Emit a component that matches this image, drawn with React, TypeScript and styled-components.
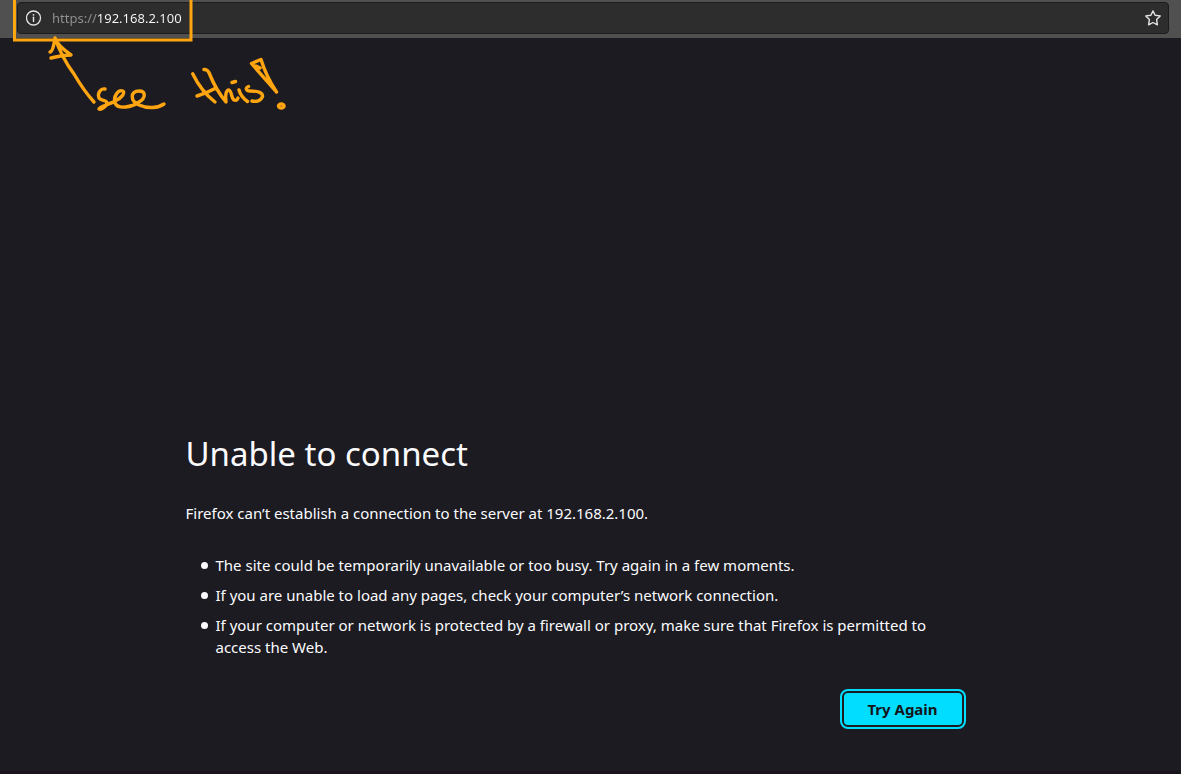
import React from "react";
import styled, { createGlobalStyle } from "styled-components";

const GlobalStyle = createGlobalStyle`
  *, *::before, *::after { box-sizing: border-box; }
  body {
    margin: 0;
    background: #1c1b22;
    color: #fbfbfe;
    font: 15px/22px "Noto Sans", sans-serif;
  }
`;

const Page = styled.div`
  position: relative;
  display: flex;
  flex-direction: column;
  min-height: 100vh;
  border-bottom: 3px solid #19141b;
`;

const Toolbar = styled.header`
  display: flex;
  height: 38px;
  padding: 2px 12px 4px 17px;
  background: #505050;
`;

const AddressBar = styled.div`
  display: flex;
  flex: 1;
  align-items: center;
  gap: 10px;
  padding: 0 7px 0 8px;
  border: 1px solid #1c1c1c;
  border-radius: 4px;
  background: #2d2d2d;
`;

const IconButton = styled.button`
  display: flex;
  padding: 0;
  border: 0;
  background: none;
  color: #e4e4e4;
`;

const AddressInput = styled.input`
  flex: 1;
  min-width: 0;
  height: 24px;
  padding: 0;
  border: 0;
  outline: 0;
  background: linear-gradient(to right, #929292 45px, #fbfbfe 45px);
  background-clip: text;
  -webkit-background-clip: text;
  color: transparent;
  font: 13px/24px "Noto Sans", sans-serif;
`;

const Annotation = styled.svg`
  position: absolute;
  top: 0;
  left: 0;
  pointer-events: none;
`;

const Main = styled.main`
  width: 100%;
  max-width: 810px;
  margin: 0 auto;
  padding: 392px 30px 40px 0;
`;

const Title = styled.h1`
  margin: 0 0 24px;
  font-size: 33px;
  font-weight: 400;
  line-height: 48px;
`;

const Summary = styled.p`
  margin: 0 0 30px;
`;

const Hints = styled.ul`
  display: flex;
  flex-direction: column;
  gap: 8px;
  margin: 0;
  padding: 0 0 0 15px;
  list-style: none;
`;

const Hint = styled.li`
  display: flex;
  gap: 8px;

  &::before {
    content: "";
    flex: none;
    width: 7px;
    height: 7px;
    margin-top: 8px;
    border-radius: 50%;
    background: currentColor;
  }
`;

const Actions = styled.div`
  display: flex;
  justify-content: flex-end;
  padding: 35px 4px 0 0;
`;

const PrimaryButton = styled.button`
  min-width: 118px;
  height: 32px;
  padding: 0 16px;
  border: 0;
  border-radius: 4px;
  outline: 2px solid #00ddff;
  outline-offset: 2px;
  background: #00ddff;
  color: #15141a;
  font: 700 15px/22px "Noto Sans", sans-serif;
`;

const InfoIcon = () => (
  <svg width="16" height="16" viewBox="0 0 16 16" fill="none" aria-hidden="true">
    <circle cx="7.5" cy="8" r="7" stroke="currentColor" strokeWidth="1.3" />
    <path d="M7.5 7.2v4.2" stroke="currentColor" strokeWidth="1.4" strokeLinecap="round" />
    <circle cx="7.5" cy="4.8" r="0.9" fill="currentColor" />
  </svg>
);

const StarIcon = () => (
  <svg width="16" height="16" viewBox="0 0 16 16" fill="none" aria-hidden="true">
    <path
      d="M8 .9 10.1 5.2 15.2 5.9 11.6 9.6 12.4 14.8 8 12.5 3.6 14.8 4.4 9.6 .8 5.9 5.9 5.2Z"
      stroke="currentColor"
      strokeWidth="1.4"
      strokeLinejoin="round"
    />
  </svg>
);

const Scribble = () => (
  <Annotation width="300" height="120" viewBox="0 0 300 120" fill="none" aria-hidden="true">
    <g stroke="#ffa50f" strokeWidth="3.4" strokeLinecap="round" strokeLinejoin="round">
      <path d="M14.5 -2V40H191V-2" strokeWidth="3" strokeLinejoin="miter" />
      <path d="M94 102 Q84 91 74 74 Q62 58 55 38 Q53 52 50 52 M55 38 Q57 45 71 55 Q63 55 51 58" />
      <path d="M105 89C101 88 97 93 99 98C101 101 107 100 107 103C106 107 101 110 99 109C100 106 109 105 115 101C122 98 125 93 123 91C118 89 113 97 115 103C118 110 132 107 139 102C146 98 146 91 139 91C130 91 130 101 139 105C148 109 158 108 164 104" />
      <path d="M192.7 73.7Q201 91 215 102M204 69.5Q208 69 210 75Q216 90 226 102C225 95 226 90 229 90C232 91 231 98 234 100Q237 101 238 98M197 96Q207 93 216 88" />
      <path d="M232 82.5L235.5 81.5M239 90Q241 97 247.5 101.5M248.5 86.5C245 88 246 91 250 91C257 91 263 92 262.5 96.5C261 101 256 102 252 101" />
      <path d="M276.5 92L251.5 63.5L261 59.5Q266 76 276.5 92M256 66L260 68" />
      <ellipse cx="281.3" cy="106" rx="2.8" ry="2" />
    </g>
  </Annotation>
);

const hints = [
  "The site could be temporarily unavailable or too busy. Try again in a few moments.",
  "If you are unable to load any pages, check your computer’s network connection.",
  "If your computer or network is protected by a firewall or proxy, make sure that Firefox is permitted to access the Web.",
];

export default function App() {
  return (
    <Page>
      <GlobalStyle />
      <Toolbar>
        <AddressBar>
          <IconButton type="button" aria-label="Site information">
            <InfoIcon />
          </IconButton>
          <AddressInput aria-label="Address" defaultValue="https://192.168.2.100" spellCheck={false} />
          <IconButton type="button" aria-label="Bookmark this page">
            <StarIcon />
          </IconButton>
        </AddressBar>
      </Toolbar>
      <Main>
        <Title>Unable to connect</Title>
        <Summary>Firefox can’t establish a connection to the server at 192.168.2.100.</Summary>
        <Hints>
          {hints.map((hint) => (
            <Hint key={hint}>{hint}</Hint>
          ))}
        </Hints>
        <Actions>
          <PrimaryButton type="button">Try Again</PrimaryButton>
        </Actions>
      </Main>
      <Scribble />
    </Page>
  );
}
